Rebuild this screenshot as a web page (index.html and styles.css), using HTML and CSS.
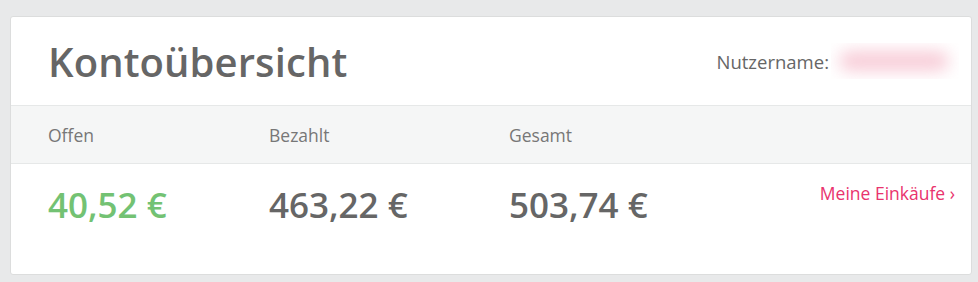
FILE: index.html
```html
<!DOCTYPE html>
<html lang="de">
<head>
<meta charset="utf-8">
<link rel="stylesheet" href="styles.css">
</head>
<body>
<div class="card">
  <div class="card-head">
    <h1 class="title">Kontoübersicht</h1>
    <div class="user">
      <span class="user-label">Nutzername:</span>
      <span class="user-name"><span class="blur"></span></span>
    </div>
  </div>
  <div class="labels">
    <div class="col c1">Offen</div>
    <div class="col c2">Bezahlt</div>
    <div class="col c3">Gesamt</div>
  </div>
  <div class="values">
    <div class="col c1 val open">40,52 €</div>
    <div class="col c2 val">463,22 €</div>
    <div class="col c3 val">503,74 €</div>
    <a class="link" href="#">Meine Einkäufe ›</a>
  </div>
</div>
</body>
</html>
```
FILE: styles.css
```css
html, body {
  margin: 0;
  padding: 0;
  background: #e8e9ea;
}
body {
  padding: 16px 6px 7px 10px;
  font-family: "Open Sans", "Noto Sans", sans-serif;
  color: #666;
}
.card {
  background: #fff;
  border: 1px solid #dcdddd;
  border-radius: 3px;
  overflow: hidden;
  height: 259px;
  box-sizing: border-box;
}
.card-head {
  display: flex;
  align-items: center;
  justify-content: space-between;
  height: 88px;
  padding: 0 12px 0 37px;
  border-bottom: 1px solid #e6e8e8;
}
.title {
  margin: 0;
  font-size: 40px;
  font-weight: 600;
  color: #666;
  letter-spacing: 0.1px;
}
.user {
  display: flex;
  align-items: center;
  gap: 2px;
}
.user-label {
  font-size: 18.5px;
  color: #666;
}
.user-name {
  display: block;
  width: 128px;
  height: 36px;
  background: #fff;
  position: relative;
  overflow: hidden;
}
.blur {
  position: absolute;
  left: 8px;
  top: 8px;
  width: 110px;
  height: 20px;
  background: #f8cdd8;
  border-radius: 10px;
  filter: blur(8px);
}
.labels {
  display: flex;
  height: 58px;
  align-items: center;
  padding: 0 0 0 37px;
  background: #f5f6f6;
  border-bottom: 1px solid #e6e8e8;
  font-size: 17.5px;
  color: #777;
  box-sizing: border-box;
}
.c1 { width: 221px; }
.c2 { width: 240px; }
.c3 { width: 240px; }
.values {
  display: flex;
  align-items: flex-start;
  padding: 17px 16px 0 37px;
}
.val {
  font-size: 35px;
  font-weight: 600;
  color: #666;
  line-height: 48px;
}
.val.open {
  color: #73c273;
}
.link {
  margin-left: auto;
  font-size: 17.5px;
  color: #e9336d;
  text-decoration: none;
  line-height: 24px;
}
```
